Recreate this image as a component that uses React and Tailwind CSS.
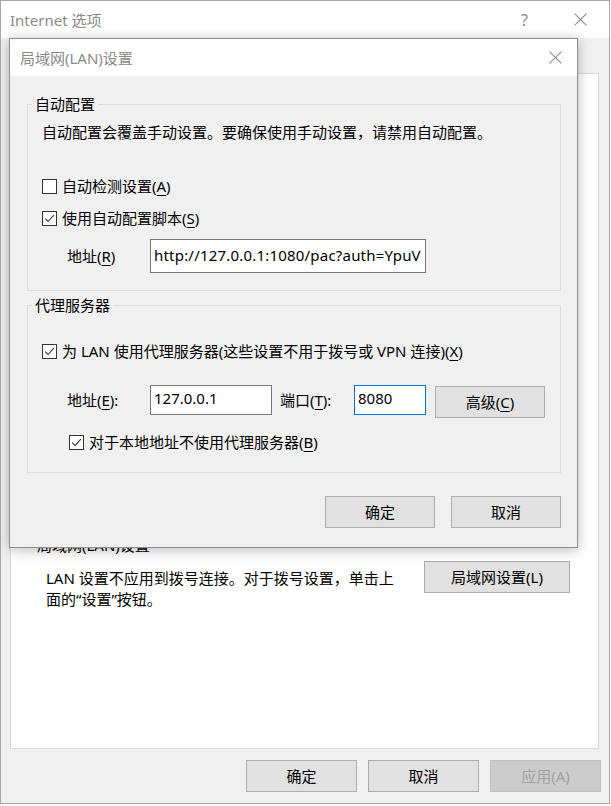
import React from 'react';

const CloseIcon = ({ size = 12 }) => (
  <svg width={size} height={size} viewBox="0 0 12 12" fill="none">
    <path d="M0.5 0.5 L11.5 11.5 M11.5 0.5 L0.5 11.5" stroke="#8a8a8a" strokeWidth="1" />
  </svg>
);

const Checkbox = ({ checked }) => (
  <span className="flex h-[15px] w-[15px] shrink-0 items-center justify-center border border-[#333333] bg-white">
    {checked && (
      <svg width="11" height="11" viewBox="0 0 11 11" fill="none">
        <path d="M1.2 5.6 L4.1 8.5 L9.8 2.2" stroke="#333333" strokeWidth="1.1" />
      </svg>
    )}
  </span>
);

const Btn = ({ children, className = '' }) => (
  <button
    type="button"
    className={`flex h-[32px] shrink-0 items-center justify-center border border-[#adadad] bg-[#e1e1e1] text-[15px] leading-[20px] text-black ${className}`}
  >
    {children}
  </button>
);

const Key = ({ children }) => <span className="underline underline-offset-[3px]">{children}</span>;

const CheckRow = ({ checked, children, className = '' }) => (
  <div className={`flex h-[20px] items-center gap-[5px] ${className}`}>
    <Checkbox checked={checked} />
    <span className="whitespace-nowrap">{children}</span>
  </div>
);

export default function App() {
  return (
    <div className="relative h-[806px] w-[611px] overflow-hidden bg-white font-['Noto_Sans','Noto_Sans_CJK_SC',sans-serif] text-[15px] leading-[20px] text-black">
      {/* Internet 选项 window */}
      <div className="flex h-[804px] w-[610px] flex-col border border-[#a8a8a8] bg-[#f0f0f0]">
        <div className="flex h-[37px] shrink-0 items-center bg-white pl-[9px] text-[#8a8a8a]">
          <span>Internet 选项</span>
          <span className="ml-auto mr-[46px] text-[16px]">?</span>
          <span className="mr-[22px]">
            <CloseIcon size={13} />
          </span>
        </div>
        <div className="h-[35px] shrink-0" />
        <div className="ml-[9px] h-[676px] w-[589px] border border-[#d9d9d9] bg-white pt-[461px] pl-[26px] pr-[28px]">
          <div className="whitespace-nowrap">局域网(LAN)设置</div>
          <div className="mt-[6px] flex items-start justify-between">
            <div className="ml-[9px] mt-[7px] whitespace-nowrap leading-[21px]">
              LAN 设置不应用到拨号连接。对于拨号设置，单击上
              <br />
              面的“设置”按钮。
            </div>
            <Btn className="w-[146px]">局域网设置(L)</Btn>
          </div>
        </div>
        <div className="mt-[11px] flex justify-end gap-[11px] pr-[8px]">
          <Btn className="w-[111px]">确定</Btn>
          <Btn className="w-[111px]">取消</Btn>
          <Btn className="w-[111px] !border-[#bfbfbf] !bg-[#cccccc] !text-[#a0a0a0]">应用(A)</Btn>
        </div>
      </div>

      {/* 局域网(LAN)设置 dialog */}
      <div className="absolute left-[9px] top-[38px] w-[569px] border border-[#8f8f8f] bg-[#f0f0f0] shadow-[0_2px_12px_rgba(0,0,0,0.28)]">
        <div className="flex h-[37px] items-center bg-white pl-[10px] pr-[15px] text-[#8a8a8a]">
          <span>局域网(LAN)设置</span>
          <span className="ml-auto">
            <CloseIcon size={13} />
          </span>
        </div>

        <div className="pl-[17px] pr-[16px] pt-[18px] pb-[19px]">
          <fieldset className="border border-[#dcdcdc] px-[14px] pb-[17px]">
            <legend className="-ml-[10px] px-[3px] leading-[20px]">自动配置</legend>
            <div className="mt-[8px] whitespace-nowrap">
              自动配置会覆盖手动设置。要确保使用手动设置，请禁用自动配置。
            </div>
            <CheckRow className="mt-[34px]">
              自动检测设置(<Key>A</Key>)
            </CheckRow>
            <CheckRow checked className="mt-[12px]">
              使用自动配置脚本(<Key>S</Key>)
            </CheckRow>
            <div className="mt-[11px] flex items-center">
              <span className="ml-[25px] w-[83px] whitespace-nowrap">
                地址(<Key>R</Key>)
              </span>
              <div className="flex h-[34px] w-[276px] items-start overflow-hidden border border-[#7a7a7a] bg-white pl-[3px] pt-[5px] whitespace-nowrap tracking-[0.2px]">
                http://127.0.0.1:1080/pac?auth=YpuV
              </div>
            </div>
          </fieldset>

          <fieldset className="mt-[4px] border border-[#dcdcdc] px-[14px] pb-[20px]">
            <legend className="-ml-[10px] px-[3px] leading-[20px]">代理服务器</legend>
            <CheckRow checked className="mt-[26px]">
              为 LAN 使用代理服务器(这些设置不用于拨号或 VPN 连接)(<Key>X</Key>)
            </CheckRow>
            <div className="mt-[24px] flex items-start">
              <span className="ml-[25px] flex h-[30px] w-[83px] items-center whitespace-nowrap">
                地址(<Key>E</Key>):
              </span>
              <div className="flex h-[30px] w-[122px] items-start border border-[#7a7a7a] bg-white pl-[3px] pt-[2px]">
                127.0.0.1
              </div>
              <span className="ml-[8px] flex h-[30px] w-[74px] items-center whitespace-nowrap">
                端口(<Key>T</Key>):
              </span>
              <div className="flex h-[30px] w-[72px] items-start border border-[#0078d7] bg-white pl-[3px] pt-[2px]">
                8080
              </div>
              <Btn className="ml-[9px] mt-[1px] w-[110px]">
                高级(<Key>C</Key>)
              </Btn>
            </div>
            <CheckRow checked className="ml-[27px] mt-[14px]">
              对于本地地址不使用代理服务器(<Key>B</Key>)
            </CheckRow>
          </fieldset>

          <div className="mt-[23px] flex justify-end gap-[16px]">
            <Btn className="w-[110px]">确定</Btn>
            <Btn className="w-[110px]">取消</Btn>
          </div>
        </div>
      </div>
    </div>
  );
}
